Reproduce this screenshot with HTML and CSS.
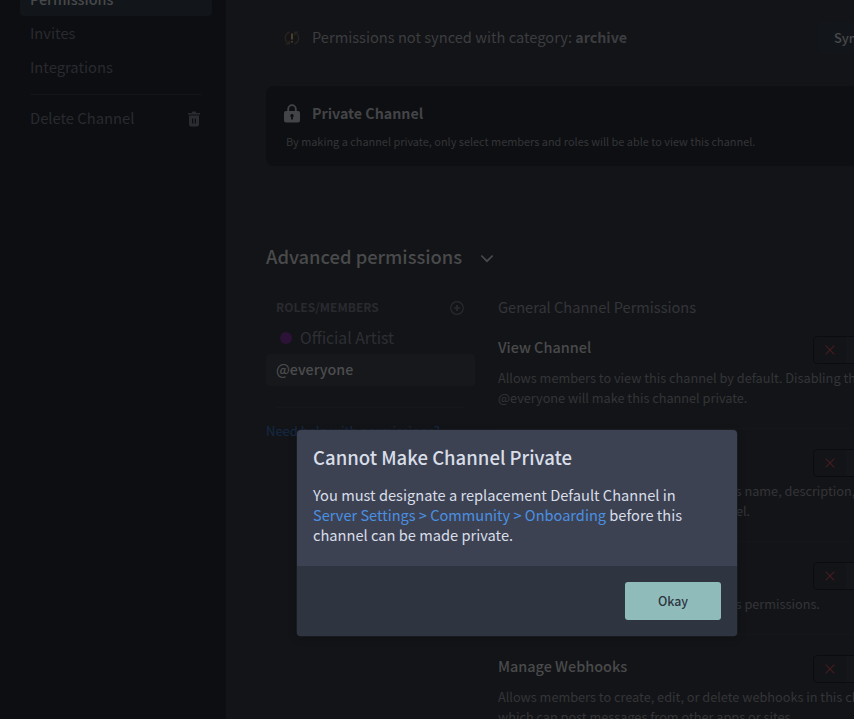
FILE: index.html
```html
<!DOCTYPE html>
<html lang="en">
<head>
<meta charset="utf-8">
<title>Channel Permissions</title>
<link rel="stylesheet" href="styles.css">
</head>
<body>
<div class="app">
  <nav class="sidebar">
    <a class="nav-item selected">Permissions</a>
    <a class="nav-item">Invites</a>
    <a class="nav-item">Integrations</a>
    <hr class="nav-rule">
    <a class="nav-item">Delete Channel
      <svg class="trash" width="14" height="16" viewBox="0 0 14 16"><path fill="currentColor" d="M1 2h4V1.3Q5 .5 5.8.5h2.4Q9 .5 9 1.3V2h4v1.6H1z"/><path fill="currentColor" fill-rule="evenodd" d="M2 4.6h10v8.9q0 2-2 2H4q-2 0-2-2zM5 7.5v5h1.3v-5zm2.8 0v5H9v-5z"/></svg>
    </a>
  </nav>
  <main class="content">
    <div class="sync">
      <svg class="sync-icon" width="16" height="16" viewBox="0 0 16 16" fill="none"><g stroke="#26231f" stroke-width="1.5"><path d="M5.500 2A6.400 6.400 0 0 0 3 12.300M10.500 14A6.400 6.400 0 0 0 13 3.700"/></g><path fill="#26231f" d="M1 14.500h5V10zM15 1.500h-5V6z"/><path fill="#5a4a2c" d="M7.200 3.500h1.600v6H7.200zM7.200 11h1.600v1.600H7.200z"/></svg>
      <span class="sync-text">Permissions not synced with category: <b>archive</b></span>
      <button class="sync-btn">Sync Now</button>
    </div>
    <section class="card">
      <div class="card-head">
        <svg width="16" height="19" viewBox="0 0 16 19"><path d="M4.200 8V5a3.800 3.800 0 0 1 7.600 0v3" fill="none" stroke="currentColor" stroke-width="1.800"/><path fill="currentColor" fill-rule="evenodd" d="M2 7h12q2 0 2 2v7.500q0 2-2 2H2q-2 0-2-2V9q0-2 2-2zM8 10a1.800 1.800 0 0 0-.9 3.300V15.500h1.800v-2.200A1.800 1.800 0 0 0 8 10z"/></svg>
        <span>Private Channel</span>
      </div>
      <p>By making a channel private, only select members and roles will be able to view this channel.</p>
    </section>
    <h2 class="advanced"><span>Advanced permissions</span>
      <svg width="14" height="9" viewBox="0 0 14 9" fill="none" stroke="currentColor" stroke-width="1.700"><path d="M1.300 1.500L7 7.200l5.700-5.700"/></svg>
    </h2>
    <div class="columns">
      <aside class="roles">
        <div class="roles-head"><span>ROLES/MEMBERS</span>
          <svg width="14" height="14" viewBox="0 0 14 14" fill="none" stroke="currentColor"><circle cx="7" cy="7" r="6.300" stroke-width="1.200"/><path stroke-width="1.700" d="M7 4v6M4 7h6"/></svg>
        </div>
        <div class="role"><i class="dot"></i><span class="artist">Official Artist</span></div>
        <div class="role active">@everyone</div>
        <hr class="roles-rule">
        <a class="help">Need help with permissions?</a>
      </aside>
      <section class="perms">
        <h3>General Channel Permissions</h3>
        <div class="perm">
          <div class="perm-head"><span>View Channel</span><div class="toggle"><svg viewBox="0 0 10 10"><path d="M.7.7l8.600 8.600M9.300.7L.7 9.300"/></svg><i></i></div></div>
          <p>Allows members to view this channel by default. Disabling this for<br>@everyone will make this channel private.</p>
        </div>
        <div class="perm">
          <div class="perm-head"><span>Manage Channel</span><div class="toggle"><svg viewBox="0 0 10 10"><path d="M.7.7l8.600 8.600M9.300.7L.7 9.300"/></svg><i></i></div></div>
          <p>Allows members to change this channel's name, description, and text<br>settings. They can also delete this channel.</p>
        </div>
        <div class="perm">
          <div class="perm-head"><span>Manage Permissions</span><div class="toggle"><svg viewBox="0 0 10 10"><path d="M.7.7l8.600 8.600M9.300.7L.7 9.300"/></svg><i></i></div></div>
          <p>Allows members to change this channel's permissions.</p>
        </div>
        <div class="perm">
          <div class="perm-head"><span>Manage Webhooks</span><div class="toggle"><svg viewBox="0 0 10 10"><path d="M.7.7l8.600 8.600M9.300.7L.7 9.300"/></svg><i></i></div></div>
          <p>Allows members to create, edit, or delete webhooks in this channel,<br>which can post messages from other apps or sites.</p>
        </div>
      </section>
    </div>
  </main>
</div>
<div class="modal" role="dialog">
  <div class="modal-body">
    <h1>Cannot Make Channel Private</h1>
    <p>You must designate a replacement Default Channel in <a>Server Settings &gt; Community &gt; Onboarding</a> before this channel can be made private.</p>
  </div>
  <footer><button>Okay</button></footer>
</div>
</body>
</html>
```
FILE: styles.css
```css
* { box-sizing: border-box; margin: 0; padding: 0; }
body {
  width: 854px; height: 719px; overflow: hidden; position: relative;
  background: #131417; color: #3a3b3e;
  font: 14.65px/20px "Noto Sans CJK SC", "Open Sans", sans-serif;
}
button { border: 0; font-family: inherit; }
hr { border: 0; height: 1px; }
svg { display: block; flex: none; }
.app { display: grid; grid-template-columns: 226px 720px; height: 719px; overflow: hidden; }

.sidebar { background: #0d0e12; padding: 0 14px 0 20px; margin-top: -16px; display: flex; flex-direction: column; gap: 2px; color: #292a2f; }
.nav-item { display: flex; align-items: center; justify-content: space-between; width: 192px; height: 32px; padding: 0 11px 2px 10px; border-radius: 4px; font-size: 14.75px; }
.nav-item.selected { background: #12161a; color: #48494a; font-weight: 500; font-size: 14.4px; }
.nav-rule { width: 172px; margin: 8px 10px 6px; background: #131418; }
.trash { color: #2b2c31; margin-top: 2px; }

.content { padding: 22px 0 0 40px; }
.sync { display: flex; align-items: center; height: 32px; padding-left: 18px; color: #3c3d40; }
.sync-text { margin: -2px 0 0 12px; width: 506px; white-space: nowrap; }
.sync-text b { font-size: 14.25px; }
.sync-btn { width: 100px; height: 32px; padding: 0 0 2px 16px; text-align: left; border-radius: 4px; background: #12161a; color: #48494a; font-size: 12.8px; font-weight: 500; }

.card { margin-top: 32px; height: 80px; border-radius: 8px; background: #0e0f12; padding: 17px 20px 0; color: #343538; }
.card-head { display: flex; align-items: center; gap: 12px; height: 20px; margin-left: -2px; color: #434447; font-size: 14.25px; font-weight: 700; }
.card p { margin-top: 8px; font-size: 10.92px; }

.advanced { display: flex; align-items: center; gap: 18px; height: 24px; margin-top: 78px; color: #494a4b; font-size: 18.35px; font-weight: 500; }
.advanced svg { margin-top: 5px; }
.columns { display: grid; grid-template-columns: 209px 448px; gap: 23px; margin-top: 29px; }
.roles { padding-top: 1px; }
.roles-head { display: flex; align-items: center; justify-content: space-between; height: 20px; padding: 0 11px 0 10px; margin-bottom: 4px; color: #292a2f; font-size: 12px; font-weight: 700; }
.roles-head span { margin-top: -2px; }
.role { display: flex; align-items: center; height: 32px; padding: 0 10px 1px; border-radius: 4px; color: #2e2f35; }
.artist { font-size: 15.7px; }
.role.active { padding-bottom: 2px; background: #17181c; color: #4c4d4e; font-size: 14.25px; font-weight: 500; }
.dot { width: 12px; height: 12px; margin: 1px 8px 0 4px; border-radius: 50%; background: #2d1238; }
.roles-rule { margin: 21px 11px 13px 10px; background: #16171a; }
.help { display: block; color: #142a47; font-size: 13px; white-space: nowrap; }

.perms h3 { height: 20px; margin-bottom: 19px; font-size: 14.6px; font-weight: 400; color: #34353a; }
.perm { display: flow-root; padding-bottom: 20px; margin-bottom: 20px; border-bottom: 1px solid #151619; white-space: nowrap; }
.perm-head { display: flex; justify-content: space-between; height: 28px; width: 420px; color: #494a4b; font-size: 14.45px; font-weight: 500; line-height: 22px; }
.perm p { margin-top: 4px; color: #343538; font-size: 12.72px; }
.toggle { display: flex; width: 105px; height: 28px; border: 1px solid #0b0c0e; border-radius: 4px; }
.toggle svg { width: 10px; height: 10px; margin: 8px 11px; fill: none; stroke: #471d21; stroke-width: 1.1; }
.toggle i { flex: 1; background: #151619; }

.modal { position: absolute; left: 297px; top: 430px; width: 440px; height: 206px; border-radius: 4px; overflow: hidden; background: #3d4252; color: #d8dee9; box-shadow: 0 0 0 1px rgba(30, 34, 42, .6), 0 2px 10px rgba(0, 0, 0, .2); }
.modal-body { height: 136px; padding: 15px 16px 0; }
.modal h1 { height: 24px; line-height: 24px; font-size: 18.55px; font-weight: 500; margin-bottom: 16px; }
.modal p { width: 390px; }
.modal a { color: #4a90e2; font-size: 14.58px; }
.modal footer { display: flex; justify-content: flex-end; height: 70px; padding: 16px; background: #2e3440; }
.modal button { width: 96px; height: 38px; border-radius: 3px; background: #8fbcbb; color: #2e3440; font-size: 12.4px; font-weight: 500; }
```
